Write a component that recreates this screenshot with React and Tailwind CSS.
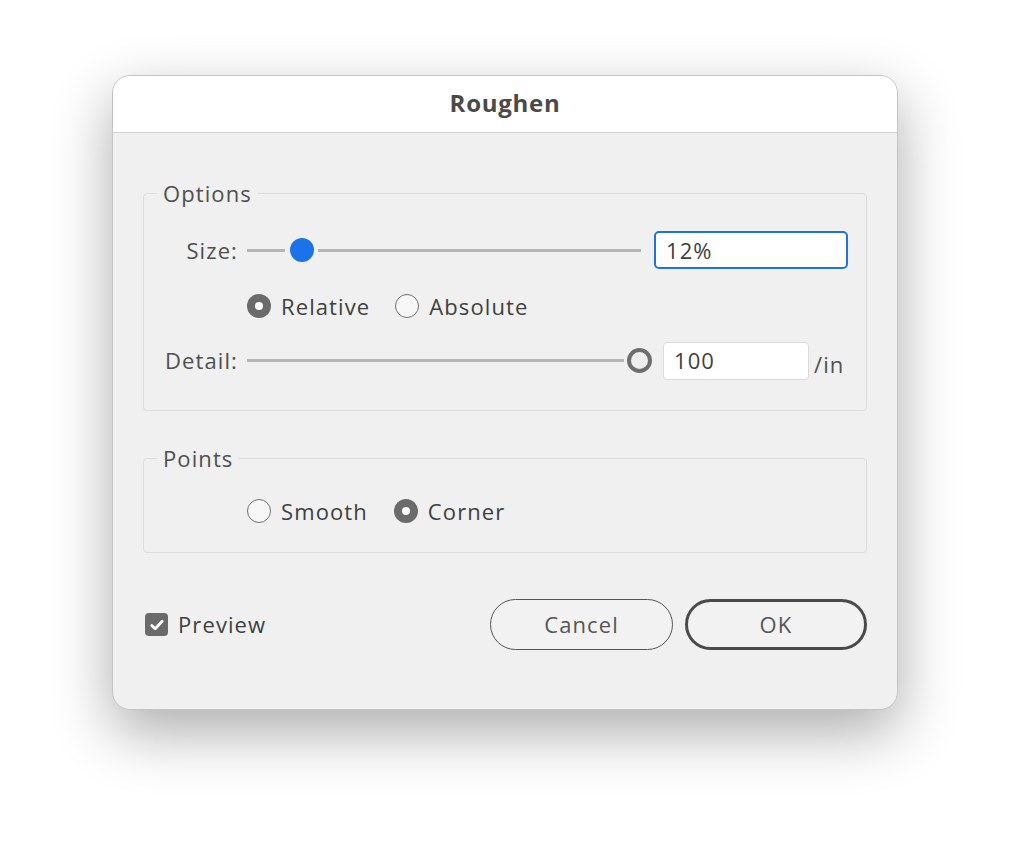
import React from 'react';

const font = { fontFamily: '"Open Sans", "Noto Sans", sans-serif' };

function Radio({ checked, label }) {
    return (
        <div className="flex items-center gap-[10px]">
            {checked ? (
                <span className="w-[24px] h-[24px] rounded-full bg-[#6b6b6b] flex items-center justify-center">
                    <span className="w-[8px] h-[8px] rounded-full bg-white" />
                </span>
            ) : (
                <span className="w-[24px] h-[24px] rounded-full border-[1.5px] border-[#707070] bg-[#f7f7f7]" />
            )}
            <span className="text-[22px] leading-[24px] tracking-[0.05em] text-[#3f3f3f]">{label}</span>
        </div>
    );
}

function Group({ title, children, className }) {
    return (
        <fieldset className={`border border-[#dcdcdc] rounded-[4px] ${className}`}>
            <legend className="ml-[13px] px-[6px] text-[22px] leading-[30px] tracking-[0.05em] text-[#4f4f4f]">{title}</legend>
            {children}
        </fieldset>
    );
}

export default function App() {
    return (
        <div className="min-h-[858px] bg-white pt-[75px] pl-[112px]" style={font}>
            <div className="w-[786px] h-[635px] rounded-[18px] overflow-hidden bg-[#f0f0f0] border border-[#c4c4c4] shadow-[0_22px_60px_rgba(0,0,0,0.33)]">
                {/* title bar */}
                <div className="h-[57px] bg-white border-b border-[#d0d0d0] flex items-center justify-center">
                    <span className="text-[24px] font-bold tracking-[0.03em] text-[#4a4a4a] mb-[2px]">Roughen</span>
                </div>

                <div className="px-[30px] pt-[45px]">
                    <Group title="Options" className="pb-[29px]">
                        {/* Size */}
                        <div className="flex items-center mt-[23px]">
                            <span className="w-[94px] text-right text-[22px] tracking-[0.05em] text-[#4f4f4f]">Size:</span>
                            <div className="ml-[9px] w-[394px] flex items-center">
                                <span className="w-[38px] h-[3px] bg-[#b5b5b5]" />
                                <span className="ml-[5px] w-[24px] h-[24px] rounded-full bg-[#1a73e8]" />
                                <span className="ml-[4px] flex-1 h-[3px] bg-[#b5b5b5]" />
                            </div>
                            <div className="ml-[13px] w-[194px] h-[38px] bg-white border-2 border-[#1f72e0] rounded-[5px] flex items-center pl-[10px] text-[22px] tracking-[0.05em] text-[#3f3f3f]">
                                12%
                            </div>
                        </div>

                        {/* Relative / Absolute */}
                        <div className="flex items-center gap-[25px] mt-[25px] ml-[103px]">
                            <Radio checked label="Relative" />
                            <Radio label="Absolute" />
                        </div>

                        {/* Detail */}
                        <div className="flex items-center mt-[22px]">
                            <span className="w-[94px] text-right text-[22px] tracking-[0.05em] text-[#4f4f4f]">Detail:</span>
                            <div className="ml-[9px] w-[405px] flex items-center">
                                <span className="flex-1 h-[3px] bg-[#b5b5b5]" />
                                <span className="ml-[3px] w-[25px] h-[25px] rounded-full border-[4px] border-[#6e6e6e] bg-[#eeeeee]" />
                            </div>
                            <div className="ml-[11px] w-[146px] h-[38px] bg-white border border-[#dadada] rounded-[4px] flex items-center pl-[10px] text-[22px] tracking-[0.05em] text-[#3f3f3f]">
                                100
                            </div>
                            <span className="ml-[5px] mt-[8px] text-[22px] tracking-[0.05em] text-[#4f4f4f]">/in</span>
                        </div>
                    </Group>

                    <Group title="Points" className="mt-[32px] pb-[29px]">
                        <div className="flex items-center gap-[26px] mt-[26px] ml-[103px]">
                            <Radio label="Smooth" />
                            <Radio checked label="Corner" />
                        </div>
                    </Group>

                    {/* footer */}
                    <div className="flex items-center mt-[46px]">
                        <div className="flex items-center gap-[10px] ml-[2px]">
                            <span className="w-[23px] h-[23px] rounded-[4px] bg-[#6b6b6b] flex items-center justify-center">
                                <svg width="16" height="16" viewBox="0 0 16 16" fill="none">
                                    <path d="M2.8 8.4l3.4 3.4L13.2 4.2" stroke="white" strokeWidth="2.8" strokeLinecap="round" strokeLinejoin="round" />
                                </svg>
                            </span>
                            <span className="text-[22px] tracking-[0.05em] text-[#3f3f3f]">Preview</span>
                        </div>
                        <div className="ml-auto flex gap-[12px]">
                            <button className="w-[183px] h-[51px] rounded-full border-[1.5px] border-[#555555] bg-[#f2f2f2] text-[22px] tracking-[0.05em] text-[#555555]">
                                Cancel
                            </button>
                            <button className="w-[182px] h-[51px] rounded-full border-[3px] border-[#4a4a4a] bg-[#f2f2f2] text-[22px] tracking-[0.05em] text-[#555555]">
                                OK
                            </button>
                        </div>
                    </div>
                </div>
            </div>
        </div>
    );
}
